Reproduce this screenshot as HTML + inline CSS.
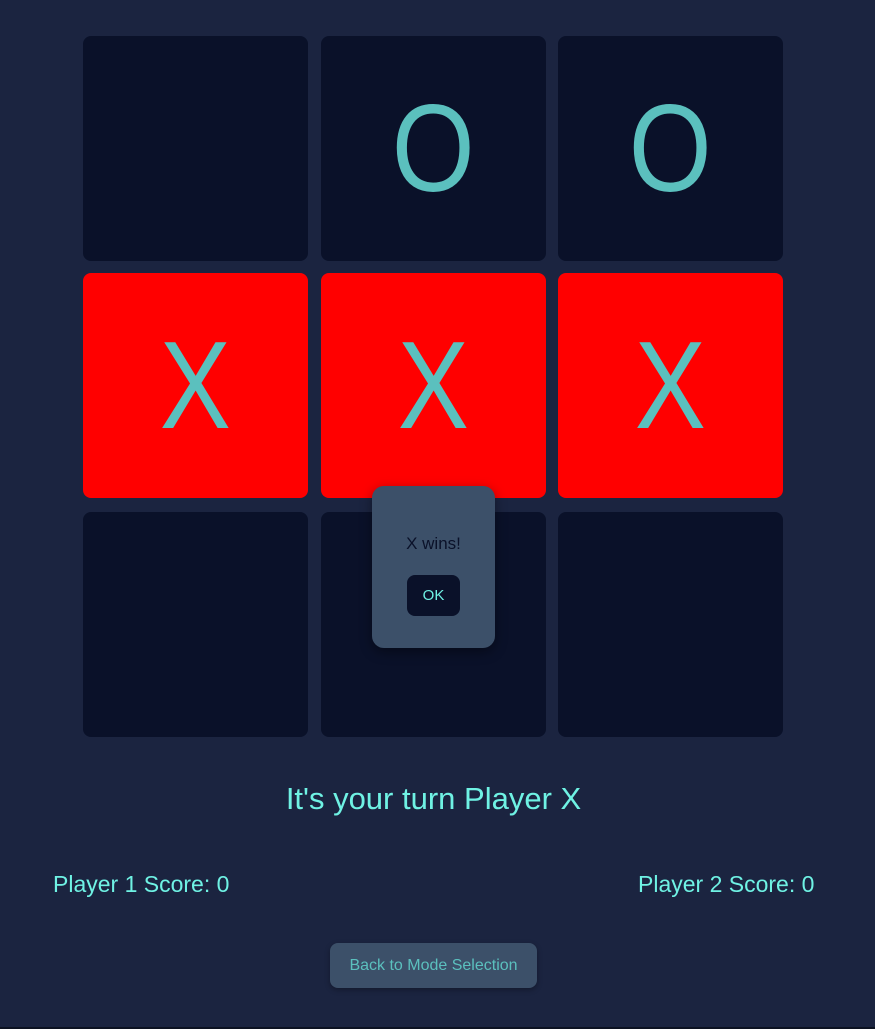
<!DOCTYPE html>
<html><head><style>
body{margin:0;width:875px;height:1029px;background:#1b2440;font-family:"Liberation Sans",sans-serif;position:relative;overflow:hidden}
.c{position:absolute;width:225px;height:225px;background:#0a1129;border-radius:8px;color:#5bc0be;font-size:124px;display:flex;align-items:center;justify-content:center;line-height:1}
.c span{display:inline-block;transform:scaleX(.86)}
.r{background:#ff0000}
.t{position:absolute;color:#6ff2e4;font-size:23px}
</style></head><body>
<div class="c" style="left:83px;top:36px"></div>
<div class="c" style="left:321px;top:36px"><span>O</span></div>
<div class="c" style="left:558px;top:36px"><span>O</span></div>
<div class="c r" style="left:83px;top:273px"><span>X</span></div>
<div class="c r" style="left:321px;top:273px"><span>X</span></div>
<div class="c r" style="left:558px;top:273px"><span>X</span></div>
<div class="c" style="left:83px;top:512px"></div>
<div class="c" style="left:321px;top:512px"></div>
<div class="c" style="left:558px;top:512px"></div>
<div style="position:absolute;left:372px;top:486px;width:123px;height:162px;background:#3c5069;border-radius:12px;box-shadow:0 4px 12px rgba(0,0,0,.4)">
<div style="position:absolute;top:48px;width:100%;text-align:center;color:#0a1129;font-size:17px">X wins!</div>
<div style="position:absolute;left:35px;top:89px;width:53px;height:41px;background:#0a1129;border-radius:8px;color:#6ff2e4;font-size:15px;line-height:41px;text-align:center">OK</div>
</div>
<div class="t" style="left:0;width:867px;text-align:center;top:781px;font-size:31px">It's your turn Player X</div>
<div class="t" style="left:53px;top:871px">Player 1 Score: 0</div>
<div class="t" style="left:638px;top:871px">Player 2 Score: 0</div>
<div style="position:absolute;left:330px;top:943px;width:207px;height:45px;background:#3c5069;border-radius:8px;color:#5bc0be;font-size:16px;line-height:45px;text-align:center;box-shadow:0 2px 6px rgba(0,0,0,.3)">Back to Mode Selection</div>
<div style="position:absolute;left:0;bottom:0;width:875px;height:2px;background:#0c1222"></div>
</body></html>
